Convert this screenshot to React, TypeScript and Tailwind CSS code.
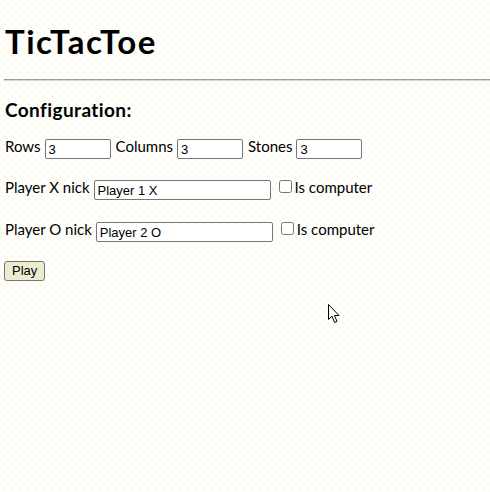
import { useState } from "react";

const inputCls =
  "h-[20px] border border-[#767676] rounded-[2px] bg-white px-[3px] text-[13px] leading-[16px] text-black outline-none font-['Liberation_Sans',Arial,sans-serif]";

function Cursor() {
  return (
    <svg
      className="absolute left-[328px] top-[304px]"
      width="13"
      height="20"
      viewBox="0 0 13 20"
    >
      <path
        d="M0.5 0.5 L0.5 15.5 L4 12.2 L6.6 18.5 L9 17.5 L6.5 11.5 L11 11.5 Z"
        fill="#fff"
        stroke="#000"
        strokeWidth="1"
        strokeLinejoin="miter"
      />
    </svg>
  );
}

export default function App() {
  const [rows, setRows] = useState("3");
  const [cols, setCols] = useState("3");
  const [stones, setStones] = useState("3");
  const [nickX, setNickX] = useState("Player 1 X");
  const [nickO, setNickO] = useState("Player 2 O");
  const [compX, setCompX] = useState(false);
  const [compO, setCompO] = useState(false);

  return (
    <div className="relative min-h-[492px] w-[490px] overflow-hidden bg-[#fefefe] bg-[radial-gradient(circle,#f7f1a0_0.5px,transparent_0.9px),radial-gradient(circle,#f7f1a0_0.5px,transparent_0.9px)] bg-[size:8px_8px] bg-[position:0.5px_-3.5px,-3.5px_0.5px] pl-[4px] text-black font-['Lato','Open_Sans',sans-serif]">
      <h1 className="pt-[21px] pl-[1px] text-[33px] font-bold leading-[40px] tracking-[1.5px]">TicTacToe</h1>
      <hr className="mt-[18px] border-0 border-t border-[#9a9a9a] h-[2px] bg-[#d6d6d6]" />

      <h3 className="mt-[17px] pl-[1px] text-[19px] font-bold leading-[24px] tracking-[0.4px]">Configuration:</h3>

      <div className="mt-[17px] flex h-[20px] items-start pl-[1px] text-[15px] leading-[14px]">
        <span>Rows</span>
        <input className={`${inputCls} ml-[4px] w-[66px]`} value={rows} onChange={(e) => setRows(e.target.value)} />
        <span className="ml-[5px]">Columns</span>
        <input className={`${inputCls} ml-[4px] w-[66px]`} value={cols} onChange={(e) => setCols(e.target.value)} />
        <span className="ml-[5px]">Stones</span>
        <input className={`${inputCls} ml-[4px] w-[66px]`} value={stones} onChange={(e) => setStones(e.target.value)} />
      </div>

      <div className="mt-[21px] flex h-[20px] items-start pl-[1px] text-[15px] leading-[14px]">
        <span>Player X nick</span>
        <input className={`${inputCls} ml-[4px] w-[177px]`} value={nickX} onChange={(e) => setNickX(e.target.value)} />
        <input
          type="checkbox"
          checked={compX}
          onChange={(e) => setCompX(e.target.checked)}
          className="ml-[8px] mr-[3px] h-[13px] w-[13px]"
        />
        <span>Is computer</span>
      </div>

      <div className="mt-[22px] flex h-[20px] items-start pl-[1px] text-[15px] leading-[14px]">
        <span>Player O nick</span>
        <input className={`${inputCls} ml-[4px] w-[177px]`} value={nickO} onChange={(e) => setNickO(e.target.value)} />
        <input
          type="checkbox"
          checked={compO}
          onChange={(e) => setCompO(e.target.checked)}
          className="ml-[8px] mr-[3px] h-[13px] w-[13px]"
        />
        <span>Is computer</span>
      </div>

      <button className="mt-[19px] block h-[20px] rounded-[3px] border border-[#767676] bg-[#eeecd0] px-[7px] text-[13px] leading-[16px] font-['Liberation_Sans',Arial,sans-serif]">
        Play
      </button>

      <Cursor />
    </div>
  );
}
